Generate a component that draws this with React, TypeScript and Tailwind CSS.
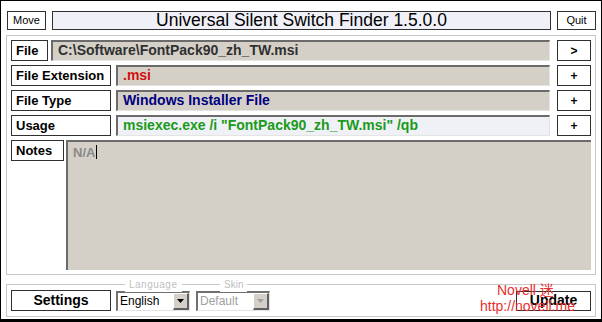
import { ReactNode } from "react";

const font = { fontFamily: '"Liberation Sans", Arial, sans-serif' };

function Label({ children, w }: { children: ReactNode; w: string }) {
  return (
    <div
      className={`${w} h-[21px] shrink-0 border border-[#303030] bg-white pl-[4px] text-[13px] font-bold leading-[19px] text-black`}
    >
      {children}
    </div>
  );
}

function Field({ children, tone, bg }: { children: ReactNode; tone: string; bg?: string }) {
  return (
    <div
      className={`h-[21px] flex-1 border-t-2 border-l-2 border-r border-b border-t-[#6b6b6b] border-l-[#6b6b6b] border-r-[#e4e4e4] border-b-[#e4e4e4] ${bg ?? "bg-[#d4d0c8]"} pl-[5px] text-[14px] font-bold leading-[17px] ${tone}`}
    >
      {children}
    </div>
  );
}

function SmallButton({ children }: { children: ReactNode }) {
  return (
    <div className="ml-[7px] flex h-[21px] w-[34px] shrink-0 items-center justify-center border border-[#303030] bg-white text-[12px] font-bold text-black">
      {children}
    </div>
  );
}

function Select({ value, disabled }: { value: string; disabled?: boolean }) {
  return (
    <div className="flex h-[20px] w-[74px] border-t-2 border-l-2 border-r border-b border-t-[#707070] border-l-[#707070] border-r-[#e4e4e4] border-b-[#e4e4e4] bg-white">
      <div
        className={`flex-1 pl-[2px] text-[12px] leading-[17px] ${disabled ? "text-[#a0a0a0]" : "text-black"}`}
      >
        {value}
      </div>
      <div className="flex w-[16px] items-center justify-center border-t border-l border-r-2 border-b-2 border-t-white border-l-white border-r-[#606060] border-b-[#606060] bg-[#d4d0c8]">
        <svg width="7" height="4" viewBox="0 0 7 4">
          <path d="M0 0h7L3.5 4z" fill={disabled ? "#a0a0a0" : "#000"} />
        </svg>
      </div>
    </div>
  );
}

export default function App() {
  return (
    <div
      style={font}
      className="relative box-border flex h-[322px] w-[602px] flex-col border border-b-[3px] border-black bg-white pl-[5px] pr-[5px]"
    >
      {/* title bar */}
      <div className="mt-[10px] flex h-[19px] items-stretch">
        <div className="ml-[1px] flex w-[39px] items-center justify-center border border-[#303030] bg-white text-[11px] text-black">
          Move
        </div>
        <div className="ml-[6px] flex w-[499px] items-center justify-center border border-[#303030] bg-[#f0f0f8] text-[17.5px] text-black">
          Universal Silent Switch Finder 1.5.0.0
        </div>
        <div className="ml-[6px] flex w-[39px] items-center justify-center border border-[#303030] bg-white text-[11px] text-black">
          Quit
        </div>
      </div>

      {/* main panel */}
      <div className="mt-[5px] flex h-[240px] flex-col gap-[4px] border border-[#c8c8c8] px-[4px] pt-[4px]">
        <div className="flex">
          <Label w="w-[37px]">File</Label>
          <div className="ml-[3px] flex flex-1">
            <Field tone="text-[#303030]">C:\Software\FontPack90_zh_TW.msi</Field>
          </div>
          <SmallButton>&gt;</SmallButton>
        </div>
        <div className="flex">
          <Label w="w-[100px]">File Extension</Label>
          <div className="ml-[5px] flex flex-1">
            <Field tone="text-[#d01010]">.msi</Field>
          </div>
          <SmallButton>+</SmallButton>
        </div>
        <div className="flex">
          <Label w="w-[100px]">File Type</Label>
          <div className="ml-[5px] flex flex-1">
            <Field tone="text-[#000080]">Windows Installer File</Field>
          </div>
          <SmallButton>+</SmallButton>
        </div>
        <div className="flex">
          <Label w="w-[100px]">Usage</Label>
          <div className="ml-[5px] flex flex-1">
            <Field tone="text-[#1a9a1a]" bg="bg-[#f0f1f6]">
              msiexec.exe /i "FontPack90_zh_TW.msi" /qb
            </Field>
          </div>
          <SmallButton>+</SmallButton>
        </div>
        <div className="flex">
          <Label w="w-[53px]">Notes</Label>
          <div className="ml-[2px] h-[130px] flex-1 border-t-2 border-l-2 border-t-[#6b6b6b] border-l-[#6b6b6b] bg-[#d4d0c8] pl-[5px] pt-[1px] text-[13px] font-bold text-[#8a8a8a]">
            N/A<span className="ml-[1px] inline-block h-[14px] w-px translate-y-[2px] bg-black" />
          </div>
        </div>
      </div>

      {/* settings bar */}
      <div className="relative mt-[9px] flex h-[33px] items-center border border-[#c8c8c8] px-[4px]">
        <span className="absolute top-[-7px] left-[118px] bg-white px-[4px] text-[10px] leading-[14px] tracking-[0.5px] text-[#c0c0c0]">
          Language
        </span>
        <span className="absolute top-[-7px] left-[213px] bg-white px-[4px] text-[10px] leading-[14px] text-[#c0c0c0]">
          Skin
        </span>
        <div className="flex h-[21px] w-[100px] items-center justify-center border border-[#303030] bg-white text-[14px] font-bold text-black">
          Settings
        </div>
        <div className="ml-[5px]">
          <Select value="English" />
        </div>
        <div className="ml-[6px]">
          <Select value="Default" disabled />
        </div>
        <div className="ml-auto flex h-[20px] w-[75px] items-center justify-center border border-[#303030] bg-white text-[14px] font-bold text-black">
          Update
        </div>
      </div>

      {/* watermark */}
      <span
        className="pointer-events-none absolute top-[281px] left-[496px] text-[14px] leading-[16px] text-[#e63030]"
        style={{ fontFamily: '"Liberation Sans", "Noto Sans CJK SC", sans-serif' }}
      >
        Novell 迷
      </span>
      <span className="pointer-events-none absolute top-[297px] left-[479px] text-[14px] leading-[16px] text-[#e63030]">
        http://novell.me
      </span>
    </div>
  );
}
